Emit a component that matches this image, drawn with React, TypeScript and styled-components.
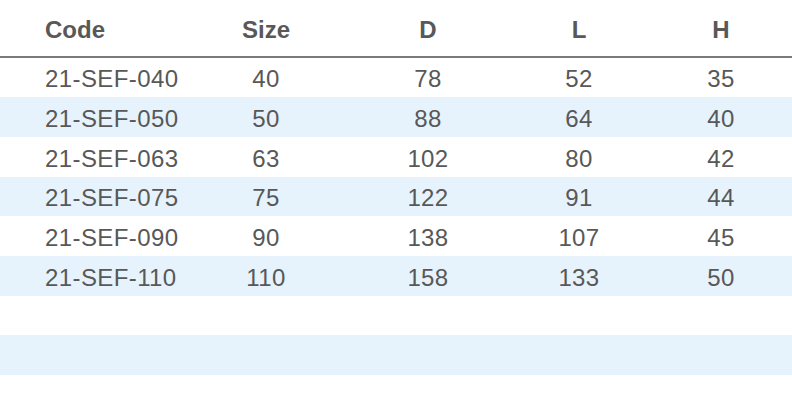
import React from "react";
import styled, { createGlobalStyle } from "styled-components";

const Global = createGlobalStyle`
  html, body { margin: 0; padding: 0; background: #ffffff; }
  body { font-family: "Liberation Sans", Arial, Helvetica, sans-serif; }
`;

const cols = "184px 164px 160px 142px 142px";

const Table = styled.div`
  width: 792px;
  display: flex;
  flex-direction: column;
  color: #585858;
`;

const HeaderRow = styled.div`
  display: grid;
  grid-template-columns: ${cols};
  height: 57.6px;
  padding-top: 4px;
  box-sizing: border-box;
  align-items: center;
  border-bottom: 2px solid #7a7a7a;
  font-size: 24px;
  font-weight: 700;
`;

const Row = styled.div<{ $shaded: boolean }>`
  display: grid;
  grid-template-columns: ${cols};
  height: 39.67px;
  padding-top: 4px;
  box-sizing: border-box;
  align-items: center;
  background: ${(p) => (p.$shaded ? "#e6f3fc" : "#ffffff")};
  font-size: 24px;
  font-weight: 400;
  letter-spacing: 0.4px;
`;

const Cell = styled.div<{ $first?: boolean }>`
  padding-left: ${(p) => (p.$first ? "45px" : "0")};
  text-align: ${(p) => (p.$first ? "left" : "center")};
  white-space: nowrap;
  line-height: 1;
`;

const headers = ["Code", "Size", "D", "L", "H"];
const data: string[][] = [
  ["21-SEF-040", "40", "78", "52", "35"],
  ["21-SEF-050", "50", "88", "64", "40"],
  ["21-SEF-063", "63", "102", "80", "42"],
  ["21-SEF-075", "75", "122", "91", "44"],
  ["21-SEF-090", "90", "138", "107", "45"],
  ["21-SEF-110", "110", "158", "133", "50"],
  ["", "", "", "", ""],
  ["", "", "", "", ""],
];

export default function App() {
  return (
    <>
      <Global />
      <Table>
        <HeaderRow>
          {headers.map((h, i) => (
            <Cell key={h} $first={i === 0}>
              {h}
            </Cell>
          ))}
        </HeaderRow>
        {data.map((r, ri) => (
          <Row key={ri} $shaded={ri % 2 === 1}>
            {r.map((c, ci) => (
              <Cell key={ci} $first={ci === 0}>
                {c}
              </Cell>
            ))}
          </Row>
        ))}
      </Table>
    </>
  );
}
